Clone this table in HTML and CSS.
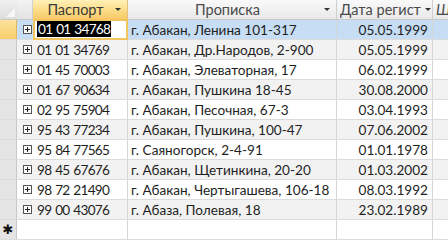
FILE: index.html
```html
<!DOCTYPE html>
<html lang="ru">
<head>
<meta charset="utf-8">
<link rel="stylesheet" href="styles.css">
</head>
<body>
<div class="sheet">
  <div class="row head">
    <div class="c sel corner"></div>
    <div class="c exp hexp"></div>
    <div class="c pass hsel"><span class="htext">Паспорт</span><span class="arr"></span></div>
    <div class="c addr"><span class="htext">Прописка</span><span class="arr"></span></div>
    <div class="c date"><span class="htext left">Дата регист</span><span class="arr"></span></div>
    <div class="c next"><span class="htext left it">Щ</span></div>
  </div>

  <div class="row cur">
    <div class="c sel selcur"></div>
    <div class="c exp"><span class="plus"></span></div>
    <div class="c pass active"><span class="hl">01 01 34768</span></div>
    <div class="c addr">г. Абакан, Ленина 101-317</div>
    <div class="c date">05.05.1999</div>
    <div class="c next"></div>
  </div>
  <div class="row alt">
    <div class="c sel"></div>
    <div class="c exp"><span class="plus"></span></div>
    <div class="c pass">01 01 34769</div>
    <div class="c addr">г. Абакан, Др.Народов, 2-900</div>
    <div class="c date">05.05.1999</div>
    <div class="c next"></div>
  </div>
  <div class="row">
    <div class="c sel"></div>
    <div class="c exp"><span class="plus"></span></div>
    <div class="c pass">01 45 70003</div>
    <div class="c addr">г. Абакан, Элеваторная, 17</div>
    <div class="c date">06.02.1999</div>
    <div class="c next"></div>
  </div>
  <div class="row alt">
    <div class="c sel"></div>
    <div class="c exp"><span class="plus"></span></div>
    <div class="c pass">01 67 90634</div>
    <div class="c addr">г. Абакан, Пушкина 18-45</div>
    <div class="c date">30.08.2000</div>
    <div class="c next"></div>
  </div>
  <div class="row">
    <div class="c sel"></div>
    <div class="c exp"><span class="plus"></span></div>
    <div class="c pass">02 95 75904</div>
    <div class="c addr">г. Абакан, Песочная, 67-3</div>
    <div class="c date">03.04.1993</div>
    <div class="c next"></div>
  </div>
  <div class="row alt">
    <div class="c sel"></div>
    <div class="c exp"><span class="plus"></span></div>
    <div class="c pass">95 43 77234</div>
    <div class="c addr">г. Абакан, Пушкина, 100-47</div>
    <div class="c date">07.06.2002</div>
    <div class="c next"></div>
  </div>
  <div class="row">
    <div class="c sel"></div>
    <div class="c exp"><span class="plus"></span></div>
    <div class="c pass">95 84 77565</div>
    <div class="c addr">г. Саяногорск, 2-4-91</div>
    <div class="c date">01.01.1978</div>
    <div class="c next"></div>
  </div>
  <div class="row alt">
    <div class="c sel"></div>
    <div class="c exp"><span class="plus"></span></div>
    <div class="c pass">98 45 67676</div>
    <div class="c addr">г. Абакан, Щетинкина, 20-20</div>
    <div class="c date">01.03.2002</div>
    <div class="c next"></div>
  </div>
  <div class="row">
    <div class="c sel"></div>
    <div class="c exp"><span class="plus"></span></div>
    <div class="c pass">98 72 21490</div>
    <div class="c addr">г. Абакан, Чертыгашева, 106-18</div>
    <div class="c date">08.03.1992</div>
    <div class="c next"></div>
  </div>
  <div class="row alt">
    <div class="c sel"></div>
    <div class="c exp"><span class="plus"></span></div>
    <div class="c pass">99 00 43076</div>
    <div class="c addr">г. Абаза, Полевая, 18</div>
    <div class="c date">23.02.1989</div>
    <div class="c next"></div>
  </div>
  <div class="row newrow">
    <div class="c sel star">&#x2731;</div>
    <div class="c exp"></div>
    <div class="c pass"></div>
    <div class="c addr"></div>
    <div class="c date"></div>
    <div class="c next"></div>
  </div>
</div>
</body>
</html>
```

FILE: styles.css
```css
html, body {
  margin: 0;
  padding: 0;
  background: #ffffff;
  overflow: hidden;
}

.sheet {
  width: 448px;
  overflow: hidden;
  font-family: "Lato", "Open Sans", sans-serif;
  font-size: 13.6px;
  color: #1e1e1e;
}

.row {
  display: flex;
  height: 20px;
  box-sizing: border-box;
  border-bottom: 1px solid #dcdcdc;
  background: #ffffff;
}

.row.alt {
  background: #f2f2f2;
}

.row.cur {
  background: #c6ddf4;
}

.c {
  box-sizing: border-box;
  border-right: 1px solid #d6d6d6;
  height: 19px;
  line-height: 20px;
  white-space: nowrap;
  overflow: hidden;
  flex: none;
  position: relative;
}

.sel { width: 17px; background: #e4e4e4; border-right: 1px solid #c8c8c8; }
.exp { width: 16px; border-right: none; display: flex; align-items: center; justify-content: center; }
.pass { width: 95px; padding-left: 4px; letter-spacing: -0.7px; word-spacing: 1px; }
.addr { width: 209px; padding-left: 3px; }
.date { width: 96px; text-align: right; padding-right: 4px; }
.next { width: 40px; border-right: none; }

.head {
  height: 20px;
  border-bottom: 1px solid #c9c9c9;
  background: linear-gradient(#f9f9f9, #e9e9e9);
  color: #4a4a4a;
}

.head .c {
  border-right: 1px solid #cfcfcf;
  display: flex;
  align-items: center;
  padding: 0 3px 0 3px;
  letter-spacing: 0;
  word-spacing: 0;
  font-size: 14.5px;
}

.head .corner {
  background: linear-gradient(#efefef, #dedede);
  border-right: none;
  padding: 0;
}

.head .corner::after {
  content: "";
  position: absolute;
  right: 2px;
  bottom: 2px;
  width: 0;
  height: 0;
  border-left: 9px solid transparent;
  border-bottom: 9px solid #f7f7f7;
}

.head .hexp {
  background: linear-gradient(#f2f2f2, #e3e3e3);
}

.head .hsel {
  background: linear-gradient(#fff0b8, #fcdc86 55%, #f8c96a);
  border-right: 1px solid #e3c07a;
  color: #3a3a3a;
}

.htext {
  flex: 1;
  text-align: center;
  overflow: hidden;
}

.htext.left {
  text-align: left;
  flex: none;
}

.htext.it {
  font-style: italic;
}

.arr {
  flex: none;
  width: 0;
  height: 0;
  margin-left: auto;
  margin-right: 3px;
  border-left: 3px solid transparent;
  border-right: 3px solid transparent;
  border-top: 3px solid #333333;
}

.date .arr { margin-left: 4px; margin-right: 5px; }

.selcur {
  background: linear-gradient(#fde39e, #f8cd6c);
  border-right: 1px solid #e4b85a;
}

.plus {
  display: block;
  width: 9px;
  height: 9px;
  box-sizing: border-box;
  border: 1px solid #555555;
  background:
    linear-gradient(#222, #222) center / 5px 1px no-repeat,
    linear-gradient(#222, #222) center / 1px 5px no-repeat,
    #ffffff;
  margin-left: 4px;
}

.active {
  background: #ffffff;
  border: 2px solid #f2c55f;
  height: 21px;
  margin-top: -1px;
  padding-left: 2px;
  line-height: 17px;
  z-index: 1;
}

.hl {
  background: #000000;
  color: #ffffff;
  display: inline-block;
  line-height: 16px;
  padding: 0 1px;
}

.star {
  text-align: center;
  font-size: 13px;
  color: #111111;
  font-family: "DejaVu Sans", sans-serif;
}

.newrow .c {
  background: #ffffff;
}

.newrow .sel {
  background: #e4e4e4;
}
```
